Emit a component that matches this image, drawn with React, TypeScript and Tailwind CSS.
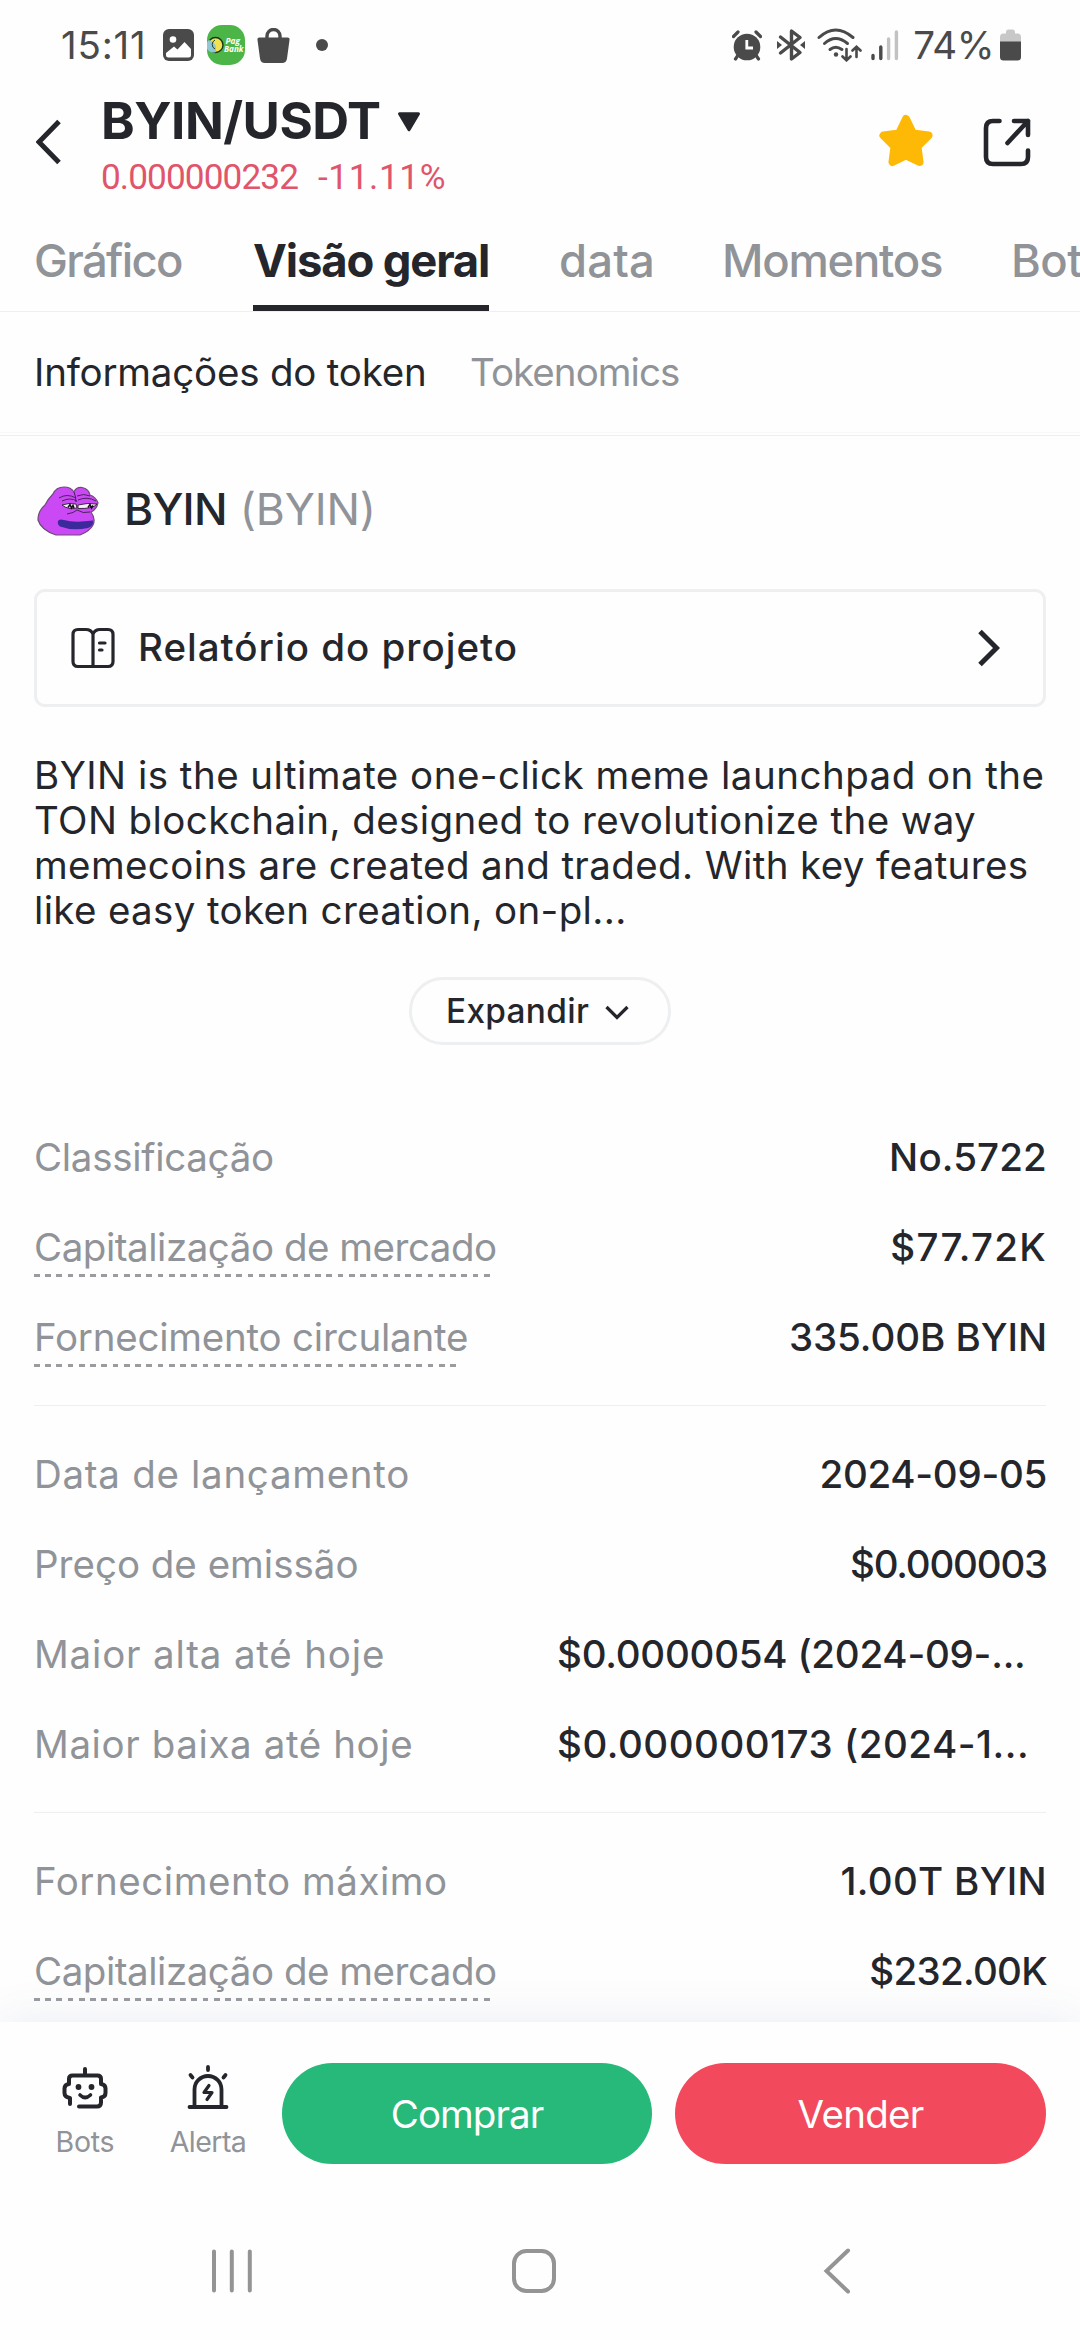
import React from "react";

const INK = "#24262b";

function StatusBar() {
  return (
    <div className="flex h-[90px] shrink-0 items-center text-[38.5px] text-[#4a4a4a]">
      <span className="ml-[61px] w-[102px] leading-[90px] tracking-[0.8px]">15:11</span>
      <svg className="h-[32px] w-[31px] shrink-0" viewBox="0 0 31 32">
        <rect width="31" height="32" rx="6" fill="#4a4a4a" />
        <circle cx="10" cy="10.500" r="3.300" fill="#fff" />
        <path d="M3 24 L11 17.500 L14.500 20.500 L21.500 13 L28 20 V26 Q28 28.500 25.500 28.500 H5.500 Q3 28.500 3 26 Z" fill="#fff" />
      </svg>
      <svg className="ml-[13px] h-[40px] w-[38px] shrink-0" viewBox="0 0 38 40">
        <rect width="38" height="40" rx="15" fill="#4cb548" />
        <circle cx="8.500" cy="20" r="7.500" fill="#f2e24f" stroke="#17351b" strokeWidth="1.400" />
        <path d="M2 15 A7 7 0 0 0 9 27 V22 Q8 17 2 15Z" fill="#8fc7d6" />
        <path d="M8 15 A5 5 0 0 0 8 24" fill="none" stroke="#28412b" strokeWidth="1" />
        <text x="18.500" y="18.500" fontFamily="Open Sans" fontSize="9" fontWeight="700" fontStyle="italic" fill="#fff" textLength="14.500" lengthAdjust="spacingAndGlyphs">Pag</text>
        <text x="17" y="26.500" fontFamily="Open Sans" fontSize="8.500" fontWeight="700" fontStyle="italic" fill="#fff" textLength="19.500" lengthAdjust="spacingAndGlyphs">Bank</text>
      </svg>
      <svg className="ml-[12px] h-[35px] w-[33px] shrink-0" viewBox="0 0 33 35">
        <path d="M10 12 V8 A6.500 6.500 0 0 1 23 8 V12" fill="none" stroke="#4a4a4a" strokeWidth="3.400" />
        <path d="M2.500 9.500 H30.500 Q33 9.500 32.500 12 L30 30.500 Q29.300 35 25 35 H8 Q3.700 35 3 30.500 L0.500 12 Q0 9.500 2.500 9.500Z" fill="#4a4a4a" />
      </svg>
      <span className="ml-[26px] size-[12px] rounded-full bg-[#4a4a4a]" />
      <div className="ml-auto mr-[59px] flex items-center">
        <svg className="h-[32px] w-[30px]" viewBox="0 0 30 32">
          <circle cx="15" cy="18" r="13.300" fill="#4a4a4a" />
          <path d="M1.500 7.500 L6 3 M28.500 7.500 L24 3 M5.500 27 L3.500 30 M24.500 27 L26.500 30" stroke="#4a4a4a" strokeWidth="3.200" strokeLinecap="round" />
          <path d="M14.800 11 V19 H21" fill="none" stroke="#fff" strokeWidth="2.800" />
        </svg>
        <svg className="ml-[14px] h-[34px] w-[30px]" viewBox="0 0 30 34">
          <path d="M4.500 9 L24 24.500 L15.500 31 V3 L24 9.500 L4.500 25" fill="none" stroke="#4a4a4a" strokeWidth="3.400" strokeLinejoin="round" strokeLinecap="round" />
          <path d="M1 13 L6 17 L1 21Z M29 13 L24 17 L29 21Z" fill="#4a4a4a" />
        </svg>
        <svg className="ml-[11px] h-[34px] w-[46px]" viewBox="0 0 46 34">
          <g fill="none" stroke="#4a4a4a" strokeWidth="3" strokeLinecap="round">
            <path d="M2 9.500 Q18.500 -5.500 36 9.500" />
            <path d="M7.500 15.500 Q18.500 5.500 30.500 15.500" />
            <path d="M13 21.500 Q18.500 17 25 21.500" />
            <path d="M29.500 21 V32 M25.500 28.500 L29.500 32.300 L33.500 28.500 M39.500 29 V19 M35.500 22.500 L39.500 18.700 L43.500 22.500" strokeWidth="2.600" />
          </g>
          <circle cx="19" cy="26.500" r="2.200" fill="#4a4a4a" />
        </svg>
        <svg className="ml-[8px] h-[32px] w-[28px]" viewBox="0 0 28 32">
          <path d="M2 26.500 V29.500 M9.800 18 V29.500" stroke="#4a4a4a" strokeWidth="3.400" strokeLinecap="round" />
          <path d="M17.600 10 V29.500 M25.400 3 V29.500" stroke="#c2c2c2" strokeWidth="3.400" strokeLinecap="round" />
        </svg>
        <span className="ml-[14px] leading-[90px] tracking-[-0.46px]">74%</span>
        <svg className="ml-[6px] h-[32px] w-[21px]" viewBox="0 0 21 32">
          <path d="M6 3 Q6 0.500 8 0.500 H13 Q15 0.500 15 3 V4.500 H17.500 Q21 4.500 21 8 V14 H0 V8 Q0 4.500 3.500 4.500 H6Z" fill="#c8c8c8" />
          <path d="M0 12.500 H21 V28 Q21 31.500 17.500 31.500 H3.500 Q0 31.500 0 28Z" fill="#4a4a4a" />
        </svg>
      </div>
    </div>
  );
}

function Header() {
  return (
    <div className="flex h-[140px] shrink-0 items-start">
      <svg className="ml-[36px] mt-[29px] h-[46px] w-[25px] shrink-0" viewBox="0 0 25 46">
        <path d="M23 2.500 L3 23 L23 43.500" fill="none" stroke={INK} strokeWidth="5" />
      </svg>
      <div className="ml-[40px] mt-[1px]">
        <div className="flex items-center">
          <span className="text-[51px] font-bold leading-[60px] tracking-[-0.48px]">BYIN/USDT</span>
          <svg className="ml-[16px] mt-[1px] h-[20px] w-[24px]" viewBox="0 0 24 20">
            <path d="M2.500 1.800 H21.500 L12 17.800Z" fill={INK} stroke={INK} strokeWidth="3" strokeLinejoin="round" />
          </svg>
        </div>
        <div className="mt-[3px] flex font-['Roboto',sans-serif] text-[35.200px] leading-[46px] text-[#e0556b]">
          <span className="w-[217px] tracking-[-0.91px]">0.000000232</span>
          <span className="tracking-[0.600px]">-11.11%</span>
        </div>
      </div>
      <svg className="ml-auto mt-[23px] h-[56px] w-[56px] shrink-0" viewBox="0 0 56 56">
        <path d="M28 6 L35 20.500 L50.500 22.500 L39.500 33.500 L41.500 49 L28 42.500 L14.500 49 L16.500 33.500 L5.500 22.500 L21 20.500Z" fill="#feb806" stroke="#feb806" strokeWidth="8" strokeLinejoin="round" />
      </svg>
      <svg className="ml-[48px] mr-[48px] mt-[27px] h-[50px] w-[50px] shrink-0" viewBox="0 0 50 50">
        <g fill="none" stroke={INK} strokeWidth="4.600" strokeLinecap="round" strokeLinejoin="round">
          <path d="M17.500 4 H11 Q4 4 4 11 V40 Q4 47 11 47 H39 Q46 47 46 40 V33.500" />
          <path d="M32 4 H46 V18 M46 4 L25.500 26" />
        </g>
      </svg>
    </div>
  );
}

function Tabs() {
  return (
    <div className="flex h-[82px] shrink-0 gap-[70px] overflow-hidden whitespace-nowrap border-b border-[#eff0f1] pl-[34px] text-[45.400px] font-medium leading-[62px] text-[#909398]">
      <span className="w-[149px] shrink-0 tracking-[-1.67px]">Gráfico</span>
      <span className="h-[81px] w-[236px] shrink-0 border-b-[6px] border-[#24262b] font-bold tracking-[-1.140px] text-[#24262b]">Visão geral</span>
      <span className="w-[93px] shrink-0 tracking-[0.170px]">data</span>
      <span className="w-[219px] shrink-0 tracking-[-1.210px]">Momentos</span>
      <span className="shrink-0 tracking-[-0.500px]">Bots</span>
    </div>
  );
}

function TokenLogo() {
  return (
    <svg className="ml-[-4px] h-[64px] w-[80px]" viewBox="0 0 80 64">
      <path d="M8 42 Q8 33 15 27 Q18 21 23 16 Q26 9 34 9 Q41 9 44 14 Q46 9 52 9.500 Q59 11 60 17 Q66 19 68 25 Q67 31 61 34 Q66 41 63 47 Q60 53 50 57 H26 Q11 52 8 42Z" fill="#cb49f5" stroke="#6d4a78" strokeWidth="1.200" />
      <path d="M28 43 Q29 40.500 34 42 Q44 45 63 42.500 Q64 48 58 50 Q42 53 30 48.500 Q27 46 28 43Z" fill="#3c2a9c" />
      <path d="M32 27 Q39 24.500 46 26 L47 30 Q38 32 32 27Z M48 27 Q57 24.500 67 26 Q63 31 48 30.500Z" fill="#f4eef7" stroke="#2c1a35" strokeWidth="0.900" />
      <path d="M38 29.500 L40 26.500 L41.500 30 L43 27.500 L44 30 M58 29.500 L60 26.500 L61.500 30 L63 27.500" fill="none" stroke="#151018" strokeWidth="1.500" />
      <path d="M29 20 Q37 15 46 20 M32 23 Q40 19 47 23 M47 18 Q54 15 60 18 M48 22 Q57 18 66 23 M37 36 Q44 35 47 32 Q53 36 60 34 M44 14 Q46 19 46 24" fill="none" stroke="#3a1d49" strokeWidth="0.900" />
    </svg>
  );
}

const dash = "h-[3px] bg-[repeating-linear-gradient(90deg,#9a9ca0_0_5.6px,transparent_5.6px_11.25px)]";

type RowData = { label: string; value: string; lt: string; vt: string; underline?: string; wide?: boolean };

function Row({ label, value, lt, vt, underline, wide }: RowData) {
  return (
    <div className="flex h-[90px] items-start justify-between whitespace-nowrap text-[38.500px] leading-[54px]">
      <div className="pt-[18px] text-[#909398]">
        <div className={lt}>{label}</div>
        {underline && <div className={`${dash} ${underline}`} />}
      </div>
      <span className={`mt-[18px] font-medium ${wide ? "w-[489px]" : "mr-[-1px]"} ${vt}`}>{value}</span>
    </div>
  );
}

const groups: RowData[][] = [
  [
    { label: "Classificação", lt: "tracking-[-0.300px]", value: "No.5722", vt: "tracking-[0.150px]" },
    { label: "Capitalização de mercado", lt: "tracking-[-0.470px]", value: "$77.72K", vt: "tracking-[1.250px]", underline: "w-[458px]" },
    { label: "Fornecimento circulante", lt: "tracking-[-0.220px]", value: "335.00B BYIN", vt: "tracking-[-0.050px]", underline: "w-[424px]" },
  ],
  [
    { label: "Data de lançamento", lt: "tracking-[0.700px]", value: "2024-09-05", vt: "tracking-[-0.280px]" },
    { label: "Preço de emissão", lt: "tracking-[0.000px]", value: "$0.000003", vt: "tracking-[-1.200px]" },
    { label: "Maior alta até hoje", lt: "tracking-[0.820px]", value: "$0.0000054 (2024-09-...", vt: "tracking-[-0.230px]", wide: true },
    { label: "Maior baixa até hoje", lt: "tracking-[0.600px]", value: "$0.000000173 (2024-1...", vt: "tracking-[0.520px]", wide: true },
  ],
  [
    { label: "Fornecimento máximo", lt: "tracking-[0.540px]", value: "1.00T BYIN", vt: "tracking-[0.300px]" },
    { label: "Capitalização de mercado", lt: "tracking-[-0.470px]", value: "$232.00K", vt: "tracking-[-0.690px]", underline: "w-[458px]" },
  ],
];

function Overview() {
  return (
    <div className="px-[34px]">
      <div className="flex h-[147px] items-center whitespace-nowrap text-[44.400px]">
        <TokenLogo />
        <span className="ml-[14px] font-medium tracking-[-0.730px]">BYIN</span>
        <span className="ml-[13px] tracking-[-0.150px] text-[#909398]">(BYIN)</span>
      </div>
      <div className="mt-[6px] flex h-[118px] items-center rounded-[11px] border-[3px] border-[#eeeff0]">
        <svg className="ml-[34px] h-[42px] w-[44px]" viewBox="0 0 44 42">
          <g fill="none" stroke={INK} strokeWidth="3.200" strokeLinecap="round" strokeLinejoin="round">
            <path d="M22 7 Q20 2.500 15 2.500 H7 Q2 2.500 2 7.500 V34.500 Q2 39.500 7 39.500 H37 Q42 39.500 42 34.500 V7.500 Q42 2.500 37 2.500 H29 Q24 2.500 22 7 V39" />
            <path d="M28.500 16 H34 M28.500 23 H31" />
          </g>
        </svg>
        <span className="ml-[23px] text-[38.500px] font-medium tracking-[1.000px]">Relatório do projeto</span>
        <svg className="ml-auto mr-[43px] h-[38px] w-[22px]" viewBox="0 0 22 38">
          <path d="M2 2.500 L18.500 19 L2 35.500" fill="none" stroke={INK} strokeWidth="5" />
        </svg>
      </div>
      <p className="mt-[46px] whitespace-nowrap text-[38.500px] leading-[45px]">
        <span className="block tracking-[0.480px]">BYIN is the ultimate one-click meme launchpad on the</span>
        <span className="block tracking-[0.410px]">TON blockchain, designed to revolutionize the way</span>
        <span className="block tracking-[0.380px]">memecoins are created and traded. With key features</span>
        <span className="block tracking-[0.350px]">like easy token creation, on-pl...</span>
      </p>
      <div className="mx-auto mt-[44px] flex h-[68px] w-[262px] items-center rounded-full border-[3px] border-[#eeeff0]">
        <span className="ml-[34px] text-[33.400px] font-medium tracking-[0.300px]">Expandir</span>
        <svg className="ml-[16px] mt-[3px] h-[16px] w-[24px]" viewBox="0 0 24 16">
          <path d="M1.500 2 L12 12.500 L22.500 2" fill="none" stroke={INK} strokeWidth="3.200" />
        </svg>
      </div>
      <div className="mt-[67px]">
        {groups.map((rows, i) => (
          <div key={i} className={i > 0 ? "mt-[23px] border-t border-[#eeeff0] pt-[23px]" : ""}>
            {rows.map((r) => (
              <Row key={r.label} {...r} />
            ))}
          </div>
        ))}
      </div>
    </div>
  );
}

function ActionBar() {
  return (
    <div className="relative flex h-[318px] shrink-0 flex-col bg-[#fefefe] shadow-[0_0_44px_rgba(70,90,160,0.110)]">
      <div className="flex h-[182px] items-start pr-[34px] pt-[40px]">
        <div className="ml-[54px] flex w-[62px] flex-col items-center">
          <svg className="mt-[4px] h-[44px] w-[48px]" viewBox="0 0 48 44">
            <g fill="none" stroke={INK} strokeWidth="4" strokeLinecap="round" strokeLinejoin="round">
              <path d="M24 3 V9 M9 38 V32 Q3.500 31 3.500 27 V22.500 Q3.500 18.500 8 18 V13 Q8 9.500 11.500 9.500 H36.500 Q40 9.500 40 13 V18 Q44.500 18.500 44.500 22.500 V27 Q44.500 31 40 31.500 V36.500 Q40 40.500 36 40.500 H18" />
              <path d="M19 29 Q24 34 29.500 29" strokeWidth="3.600" />
            </g>
            <circle cx="17.500" cy="21" r="2.900" fill={INK} />
            <circle cx="30.500" cy="21" r="2.900" fill={INK} />
          </svg>
          <span className="mt-[15px] text-[28.500px] leading-[34px] tracking-[-0.240px] text-[#909398]">Bots</span>
        </div>
        <div className="ml-[53px] flex w-[78px] flex-col items-center">
          <svg className="mt-[2px] h-[46px] w-[44px]" viewBox="0 0 44 46">
            <g fill="none" stroke={INK} strokeWidth="3.800" strokeLinecap="round" strokeLinejoin="round">
              <path d="M3.500 43 H40.500 M8.500 43 V25.500 A13.500 13.500 0 0 1 35.500 25.500 V43" />
              <path d="M22 3 V6 M4.500 11 L6.500 13.500 M39.500 11 L37.500 13.500" />
              <path d="M23 21.500 L18 28.500 H26 L21 35.500" strokeWidth="3.200" />
            </g>
          </svg>
          <span className="mt-[15px] text-[28.500px] leading-[34px] tracking-[-0.550px] text-[#909398]">Alerta</span>
        </div>
        <button className="ml-[35px] mt-[1px] h-[101px] w-[370px] rounded-full bg-[#26b97a] pt-[3px] text-[38.500px] tracking-[-0.940px] text-white">Comprar</button>
        <button className="ml-[23px] mt-[1px] h-[101px] w-[371px] rounded-full bg-[#f2495c] pt-[3px] text-[38.500px] tracking-[-0.760px] text-white">Vender</button>
      </div>
      <svg className="mt-[43px] ml-[210px] h-[48px] w-[644px]" viewBox="0 0 644 48" fill="none" stroke="#949494" strokeWidth="4" strokeLinecap="round">
        <path d="M4 4.500 V43.500 M21.800 4.500 V43.500 M39.800 4.500 V43.500" />
        <rect x="304" y="4" width="40" height="40" rx="12.500" />
        <path d="M638 3.500 L616.500 24 L638 44.500" />
      </svg>
    </div>
  );
}

export default function App() {
  return (
    <div className="flex h-[2340px] w-[1080px] flex-col overflow-hidden bg-[#fefefe] font-['Inter','Liberation_Sans',sans-serif] text-[#24262b]">
      <StatusBar />
      <Header />
      <Tabs />
      <div className="flex h-[121px] shrink-0 items-center border-b border-[#f8f8f9] pl-[34px] pt-[1px] text-[38.500px]">
        <span className="w-[436px] tracking-[-0.210px]">Informações do token</span>
        <span className="tracking-[-0.950px] text-[#909398]">Tokenomics</span>
      </div>
      <div className="mt-[2px] min-h-0 flex-1 overflow-hidden border-t border-[#eeeff0]">
        <Overview />
      </div>
      <ActionBar />
    </div>
  );
}
